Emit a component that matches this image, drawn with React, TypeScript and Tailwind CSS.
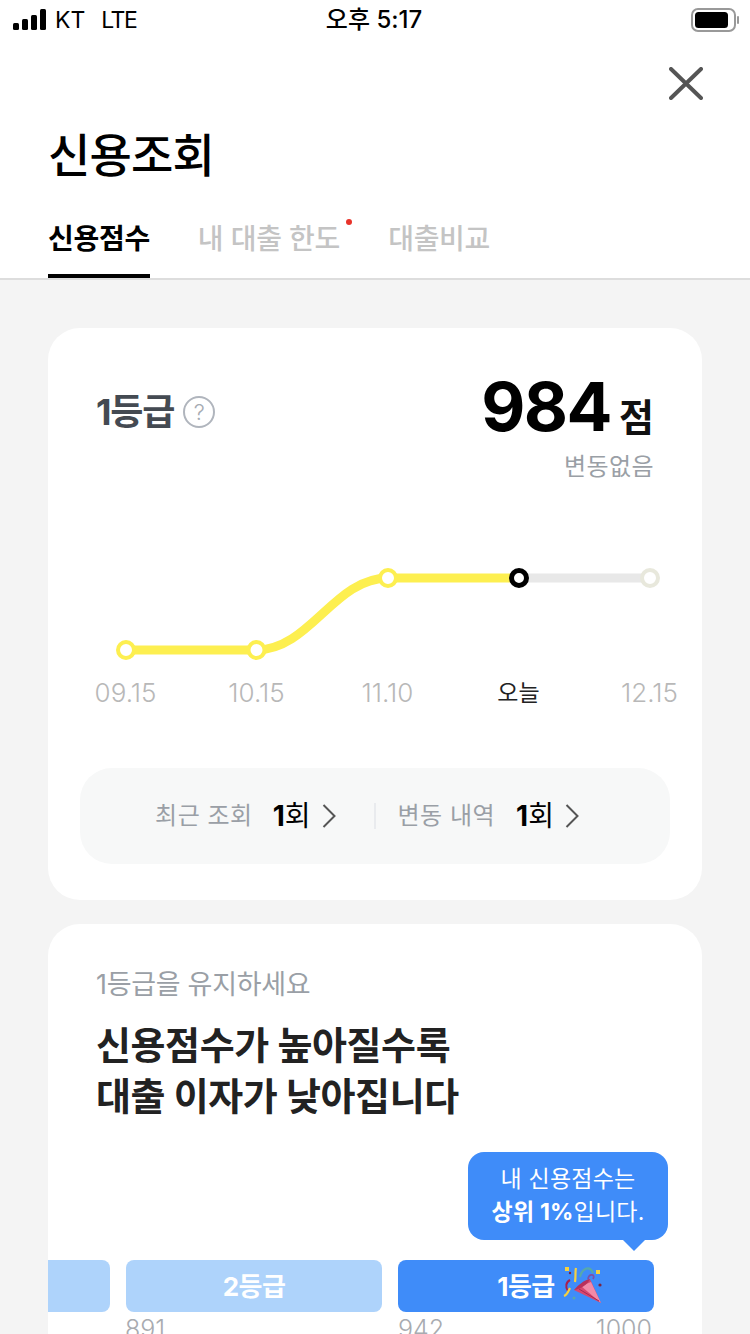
const font = "font-['Inter','Noto_Sans_CJK_KR',sans-serif]";

const StatusBar = () => (
  <div className="flex h-[40px] items-center justify-between pl-[13px] pr-[11px] text-black">
    <div className="flex w-[236px] items-center">
      <svg width="34" height="22" viewBox="0 0 34 22" fill="currentColor">
        <rect x="0" y="14" width="6" height="7" rx="1.5" />
        <rect x="9" y="10" width="6" height="11" rx="1.5" />
        <rect x="18" y="6" width="6" height="15" rx="1.5" />
        <rect x="27" y="0" width="6" height="21" rx="1.5" />
      </svg>
      <span className="ml-[8px] text-[23px] leading-none">KT</span>
      <span className="ml-[16px] text-[23px] leading-none tracking-[-1.5px]">LTE</span>
    </div>
    <span className="text-[24px] font-medium leading-none">오후 5:17</span>
    <div className="flex w-[240px] justify-end">
      <svg width="48" height="24" viewBox="0 0 48 24">
        <rect x="1" y="1" width="43" height="22" rx="6" fill="none" stroke="#999" strokeWidth="2" />
        <rect x="4" y="4" width="33" height="16" rx="3.5" fill="#000" />
        <rect x="46" y="8" width="2" height="8" rx="1" fill="#999" />
      </svg>
    </div>
  </div>
);

const Header = () => (
  <div className="border-b-2 border-[#ddd] bg-white px-[48px]">
    <div className="flex h-[60px] items-end justify-end">
      <svg width="34" height="33" viewBox="0 0 34 33" className="mr-[-1px]">
        <path d="M2 2L32 31M32 2L2 31" stroke="#555" strokeWidth="4" strokeLinecap="round" fill="none" />
      </svg>
    </div>
    <h1 className="mt-[23px] text-[46px] font-medium leading-[64px] tracking-[-0.8px] text-black">신용조회</h1>
    <div className="mt-[31px] flex items-start gap-[48px]">
      <div className="border-b-4 border-black pb-[14px] text-[28px] font-bold leading-[42px] tracking-[-0.3px] text-black">
        신용점수
      </div>
      <div className="relative text-[28px] font-medium leading-[42px] tracking-[-0.2px] text-[#c4c4c4]">
        내 대출 한도
        <span className="absolute -right-[12px] top-[1px] h-[6px] w-[6px] rounded-full bg-[#e8332a]" />
      </div>
      <div className="text-[28px] font-medium leading-[42px] tracking-[-0.3px] text-[#c4c4c4]">대출비교</div>
    </div>
  </div>
);

const Chart = () => (
  <svg width="654" height="140" viewBox="0 0 654 140" className="mt-[55px] block">
    <path d="M471 40H602" stroke="#e8e8e8" strokeWidth="9" fill="none" />
    <path
      d="M78 112H208C262 112 286 40 340 40H471"
      stroke="#fdef50"
      strokeWidth="9"
      fill="none"
    />
    <circle cx="78" cy="112" r="8" fill="#fff" stroke="#fdef50" strokeWidth="4" />
    <circle cx="208.500" cy="112" r="8" fill="#fff" stroke="#fdef50" strokeWidth="4" />
    <circle cx="340" cy="40" r="8" fill="#fff" stroke="#fdef50" strokeWidth="4" />
    <circle cx="471" cy="40" r="7.500" fill="#fff" stroke="#000" strokeWidth="5" />
    <circle cx="602" cy="40" r="8" fill="#fff" stroke="#e8e8dc" strokeWidth="4" />
  </svg>
);

const dates = ["09.15", "10.15", "11.10", "오늘", "12.15"];

const Chevron = () => (
  <svg width="14" height="24" viewBox="0 0 14 24" className="ml-[11px]">
    <path d="M1.500 1L12.500 12L1.500 23" stroke="#555" strokeWidth="2" fill="none" />
  </svg>
);

const ScoreCard = () => (
  <section className="rounded-[32px] bg-white pt-[44px]">
    <div className="flex items-start justify-between px-[48px]">
      <div className="mt-[16px] flex items-center">
        <span className="text-[36px] font-bold leading-[48px] tracking-[-1.2px] text-[#444a52]">1등급</span>
        <span className="ml-[9px] flex h-[32px] w-[32px] items-center justify-center rounded-full border-2 border-[#b0b5bd] text-[22px] font-light leading-none text-[#a6abb3]">
          ?
        </span>
      </div>
      <div className="flex flex-col items-end">
        <div className="flex items-baseline">
          <span className="text-[68px] font-bold leading-[68px] tracking-[-1.5px] text-black">984</span>
          <span className="ml-[8px] text-[38px] font-bold leading-[40px] text-[#111]">점</span>
        </div>
        <span className="mt-[11px] text-[24px] leading-[32px] tracking-[0.4px] text-[#9a9fa6]">변동없음</span>
      </div>
    </div>
    <Chart />
    <div className="grid grid-cols-[repeat(5,131px)] pl-[12px]">
      {dates.map((d) => (
        <span
          key={d}
          className={`text-center leading-[30px] ${d === "오늘" ? "text-[23px] text-[#222]" : "text-[26px] font-light text-[#b8b8b8]"}`}
        >
          {d}
        </span>
      ))}
    </div>
    <div className="mx-[32px] mt-[60px] flex h-[96px] items-center justify-center rounded-[32px] bg-[#f7f8f8] pr-[16px] text-[24px]">
      <span className="tracking-[0.5px] text-[#9a9fa6]">최근 조회</span>
      <span className="ml-[20px] text-[28px] font-bold text-black">
        1<span className="font-normal">회</span>
      </span>
      <Chevron />
      <span className="ml-[38px] h-[26px] w-[2px] bg-[#e9ebee]" />
      <span className="ml-[22px] tracking-[0.5px] text-[#9a9fa6]">변동 내역</span>
      <span className="ml-[21px] text-[28px] font-bold text-black">
        1<span className="font-normal">회</span>
      </span>
      <Chevron />
    </div>
    <div className="h-[36px]" />
  </section>
);

// party popper, no emoji font in the sandbox
const Popper = () => (
  <svg width="56" height="50" viewBox="0 0 56 50" className="absolute left-[157px] top-0">
    <path d="M19 30L35 19L46 43Z" fill="#d8476f" />
    <path d="M26 26L36 22L46 43Z" fill="#f28aa8" />
    <path d="M19 30C22 26 29 20 35 19C33 24 26 29 19 30Z" fill="#b9305a" />
    <path d="M24 29L44 41" stroke="#a92a52" strokeWidth="1" fill="none" />
    <path d="M13 31C10 27 11 22 15 20" stroke="#a91f4d" strokeWidth="2" fill="none" />
    <path d="M20 22C21 16 20 12 21 8" stroke="#f5d142" strokeWidth="2.200" fill="none" />
    <path d="M25 17C27 8 35 5 38 13" stroke="#57a8ac" strokeWidth="2.200" fill="none" />
    <path d="M33 19C34 13 41 14 38 19" stroke="#7f4fa8" strokeWidth="1.800" fill="none" />
    <path d="M9 36C12 35 13 32 15 28" stroke="#f5d142" strokeWidth="2.200" fill="none" />
    <rect x="10" y="7" width="4" height="4" fill="#f5d142" />
    <rect x="41" y="10" width="4" height="4" fill="#f5d142" />
    <circle cx="45" cy="25" r="1.600" fill="#7a2342" />
    <circle cx="19" cy="38" r="1.500" fill="#57a8ac" />
    <circle cx="15" cy="13" r="1.200" fill="#7a2342" />
  </svg>
);

const RateCard = () => (
  <section className="mt-[24px] rounded-t-[32px] bg-white pb-[60px] pt-[43px]">
    <p className="px-[48px] text-[27px] leading-[36px] tracking-[-0.3px] text-[#9a9fa6]">1등급을 유지하세요</p>
    <h2 className="mt-[17px] px-[48px] text-[38px] font-bold leading-[51px] tracking-[-0.4px] text-[#222]">
      신용점수가 높아질수록
      <br />
      대출 이자가 낮아집니다
    </h2>
    <div className="mt-[30px] flex justify-end pr-[34px]">
      <div className="relative flex h-[88px] w-[200px] flex-col items-center justify-center rounded-[16px] bg-[#3f8cf9] text-[23px] leading-[33px] tracking-[0.2px] text-white">
        <span>내 신용점수는</span>
        <span>
          <b className="font-bold">상위 1%</b>입니다.
        </span>
        <span className="absolute right-[23px] top-[88px] h-0 w-0 border-x-[11px] border-t-[11px] border-x-transparent border-t-[#3f8cf9]" />
      </div>
    </div>
    <div className="mt-[20px] flex gap-[16px]">
      <div className="h-[52px] w-[62px] rounded-r-[8px] bg-[#aed3fb]" />
      <div className="flex h-[52px] w-[256px] items-center justify-center rounded-[8px] bg-[#aed3fb] text-[26px] font-bold tracking-[-0.5px] text-white">
        2등급
      </div>
      <div className="relative flex h-[52px] w-[256px] items-center justify-center rounded-[8px] bg-[#3f8cf9] text-[26px] font-bold tracking-[-0.5px] text-white">
        1등급
        <Popper />
      </div>
    </div>
    <div className="mt-[2px] flex gap-[16px] text-[25px] font-light leading-[30px] text-[#a8abb0]">
      <div className="w-[62px]" />
      <div className="-ml-[1px] w-[257px]">891</div>
      <div className="flex w-[254px] justify-between">
        <span>942</span>
        <span>1000</span>
      </div>
    </div>
  </section>
);

export default function App() {
  return (
    <div className={`h-[1334px] w-[750px] overflow-hidden bg-[#f4f4f4] ${font}`}>
      <div className="bg-white">
        <StatusBar />
      </div>
      <Header />
      <main className="px-[48px] pt-[48px]">
        <ScoreCard />
        <RateCard />
      </main>
    </div>
  );
}
